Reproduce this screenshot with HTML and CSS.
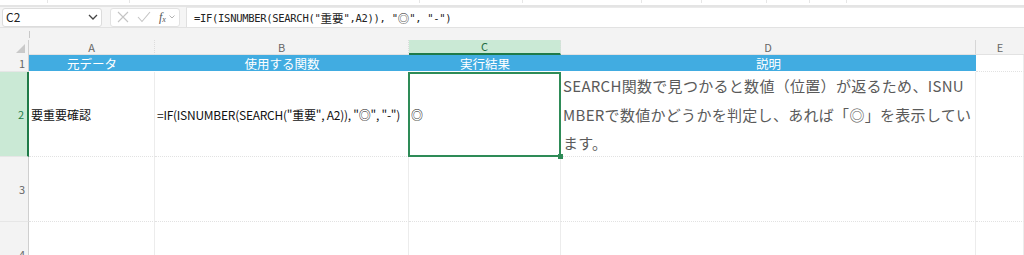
FILE: index.html
```html
<!DOCTYPE html>
<html lang="ja">
<head>
<meta charset="utf-8">
<link rel="stylesheet" href="styles.css">
</head>
<body>
<div class="app">
  <div class="ribbon-edge">
    <span></span><span></span><span></span><span></span><span></span><span></span><span></span><span></span><span></span><span class="last"></span>
  </div>
  <div class="fbar">
    <div class="namebox">
      <span class="ref">C2</span>
      <svg class="chev" width="10" height="6" viewBox="0 0 10 6"><path d="M1 1 L5 5 L9 1" fill="none" stroke="#444" stroke-width="1.3"/></svg>
    </div>
    <div class="fbtns">
      <svg width="12" height="12" viewBox="0 0 12 12"><path d="M1 1 L11 11 M11 1 L1 11" stroke="#c4c4c4" stroke-width="1.1"/></svg>
      <svg width="14" height="12" viewBox="0 0 14 12"><path d="M1 6 L5 10.5 L13 1" fill="none" stroke="#c4c4c4" stroke-width="1.1"/></svg>
      <span class="fx">f<sub>x</sub></span>
      <svg class="mini" width="6" height="4" viewBox="0 0 6 4"><path d="M0.5 0.5 L3 3 L5.5 0.5" fill="none" stroke="#aaa" stroke-width="0.9"/></svg>
    </div>
    <div class="formula">=IF(ISNUMBER(SEARCH("<span class="cjk">重要</span>",A2)), "<span class="cjk">◎</span>", "-")</div>
  </div>
  <div class="gap"><span class="tick"></span></div>
  <div class="sheet">
    <div class="corner"><span class="tri"></span></div>
    <div class="colh">A</div>
    <div class="colh">B</div>
    <div class="colh sel">C</div>
    <div class="colh">D</div>
    <div class="colh last">E</div>

    <div class="rowh">1</div>
    <div class="cell head">元データ</div>
    <div class="cell head">使用する関数</div>
    <div class="cell head">実行結果</div>
    <div class="cell head">説明</div>
    <div class="cell"></div>

    <div class="rowh sel">2</div>
    <div class="cell val">要重要確認</div>
    <div class="cell val fn">=IF(ISNUMBER(SEARCH("重要", A2)), "◎", "-")</div>
    <div class="cell val active">◎</div>
    <div class="cell desc">SEARCH関数で見つかると数値（位置）が返るため、ISNU<br>MBERで数値かどうかを判定し、あれば「◎」を表示してい<br>ます。</div>
    <div class="cell"></div>

    <div class="rowh">3</div>
    <div class="cell"></div><div class="cell"></div><div class="cell"></div><div class="cell"></div><div class="cell"></div>

    <div class="rowh">4</div>
    <div class="cell"></div><div class="cell"></div><div class="cell"></div><div class="cell"></div><div class="cell"></div>
  </div>
</div>
</body>
</html>
```

FILE: styles.css
```css
* { box-sizing: border-box; }
html, body { margin: 0; padding: 0; background: #fff; }
body { width: 1024px; height: 255px; overflow: hidden; font-family: "Noto Sans CJK JP", "Noto Sans", sans-serif; }

.app { display: flex; flex-direction: column; }

.ribbon-edge {
  display: grid;
  grid-template-columns: 48px 82px 290px 103px 119px 60px 65px 43px 37px 1fr;
  height: 7px;
  background: #fff;
  border-bottom: 2px solid #e4e4e4;
}
.ribbon-edge span { border-right: 1px solid #e6e6e6; height: 3px; }
.ribbon-edge span.last { border-right: none; }

.fbar {
  display: flex;
  align-items: center;
  height: 21px;
  padding: 1px 0 1px 2px;
  background: #f5f5f5;
  border-bottom: 1px solid #e2e2e2;
}
.namebox {
  width: 100px; height: 19px;
  background: #fff;
  border: 1px solid #dcdcdc;
  border-radius: 3px;
  display: flex; align-items: center; justify-content: space-between;
  padding: 0 3px 0 3px;
  font-size: 12px; color: #222;
}
.namebox .ref { line-height: 1; }
.fbtns {
  margin-left: 8px;
  width: 70px; height: 19px;
  background: #fff;
  border: 1px solid #e2e2e2;
  border-radius: 3px;
  display: flex; align-items: center;
  padding-left: 6px; gap: 8px;
}
.fbtns .fx {
  font-family: "Liberation Serif", serif;
  font-style: italic; font-size: 12px; color: #555;
  line-height: 1;
}
.fbtns .fx sub { font-size: 8px; vertical-align: -1px; }
.fbtns .mini { margin-left: -5px; }
.formula {
  flex: 1;
  margin-left: 6px;
  height: 20px;
  background: #fff;
  border-left: 1px solid #e0e0e0;
  border-top: 1px solid #eaeaea;
  padding-left: 7px;
  display: flex; align-items: center;
  font-family: "DejaVu Sans Mono", "Noto Sans CJK JP", monospace;
  font-size: 10.5px; color: #222;
  letter-spacing: -0.3px;
  white-space: pre;
}
.formula .cjk { font-family: "Noto Sans CJK JP", sans-serif; font-size: 11.5px; letter-spacing: 0; }

.gap { height: 12px; background: #f3f3f3; position: relative; }
.gap .tick { display: block; margin-left: 29px; margin-top: 3px; width: 1px; height: 7px; background: #c8c8c8; }

.sheet {
  display: grid;
  grid-template-columns: 29px 126px 254px 152px 415px 1fr;
  grid-template-rows: 15px 17px 85px 65px 65px;
}
.corner {
  background: #f3f3f3;
  border-right: 1px solid #cfcfcf;
  position: relative;
}
.corner .tri {
  position: absolute; right: 3px; bottom: 2px;
  width: 0; height: 0;
  border-left: 9px solid transparent;
  border-bottom: 9px solid #c9c9c9;
}
.colh {
  background: #f3f3f3;
  border-right: 1px dotted #dcdcdc;
  border-bottom: 1px solid #e2e2e2;
  font-size: 11px; color: #666;
  display: flex; align-items: center; justify-content: center;
  line-height: 1;
}
.colh.last { border-left: 1px solid #d6d6d6; border-right: none; margin-left: -1px; }
.colh.sel { background: #cae9d5; color: #1f6e43; border-bottom: 2px solid #1f7a48; }

.rowh {
  background: #f3f3f3;
  border-right: 1px solid #cfcfcf;
  border-bottom: 1px solid #e6e6e6;
  font-size: 11px; color: #666;
  display: flex; align-items: center; justify-content: flex-end;
  padding-right: 3px;
}
.rowh.sel { background: #cae9d5; color: #1f7a48; border-right: 2px solid #1f7a48; }

.cell {
  border-right: 1px solid #ececec;
  border-bottom: 1px dotted #e2e2e2;
  font-size: 12px; color: #111;
  display: flex; align-items: center;
  white-space: nowrap;
  overflow: visible;
}
.cell.head {
  background: #41ace1;
  color: #fff;
  justify-content: center;
  border-right: none;
  border-bottom: 1px solid #fff;
  font-size: 12.5px;
}
.cell.val { padding-left: 2px; }
.cell.fn { letter-spacing: -0.25px; }
.cell.active { position: relative; }
.cell.active::after {
  content: "";
  position: absolute; left: -1px; top: 0; right: -1px; bottom: -1px;
  border: 2px solid #2e8b57;
}
.cell.active::before {
  content: "";
  position: absolute; right: -3px; bottom: -3px;
  width: 5px; height: 5px;
  background: #2e8b57;
  z-index: 2;
}
.cell.desc {
  display: block;
  white-space: nowrap;
  line-height: 28.5px;
  font-size: 15px;
  color: #5a5a5a;
  padding: 0 2px 0 2px;
  letter-spacing: 0.3px;
}
```
